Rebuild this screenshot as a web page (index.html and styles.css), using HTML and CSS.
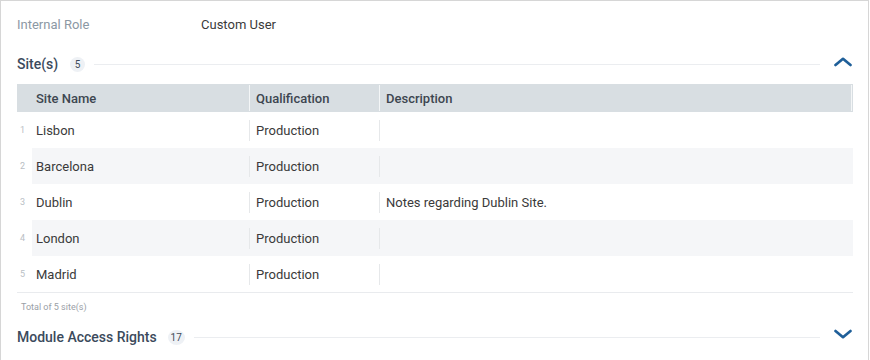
FILE: index.html
```html
<!DOCTYPE html>
<html>
<head>
<meta charset="utf-8">
<link rel="stylesheet" href="styles.css">
</head>
<body>
<div class="card">
  <div class="field">
    <span class="field-label">Internal Role</span>
    <span class="field-value">Custom User</span>
  </div>

  <div class="section-head">
    <span class="section-title">Site(s)</span>
    <span class="badge">5</span>
    <span class="rule"></span>
    <svg class="chev" width="18" height="10" viewBox="0 0 18 10"><path d="M1.5 8 L9 1.8 L16.5 8" fill="none" stroke="#1f5f99" stroke-width="2.7" stroke-linecap="round" stroke-linejoin="round"/></svg>
  </div>

  <div class="grid">
    <div class="head">
      <div class="hnum"></div>
      <div class="hcell first">Site Name</div>
      <div class="hcell">Qualification</div>
      <div class="hcell last">Description</div>
    </div>
    <div class="row">
      <div class="num">1</div>
      <div class="cell first"><span>Lisbon</span></div>
      <div class="cell"><span>Production</span></div>
      <div class="cell"><span></span></div>
    </div>
    <div class="row alt">
      <div class="num">2</div>
      <div class="cell first"><span>Barcelona</span></div>
      <div class="cell"><span>Production</span></div>
      <div class="cell"><span></span></div>
    </div>
    <div class="row">
      <div class="num">3</div>
      <div class="cell first"><span>Dublin</span></div>
      <div class="cell"><span>Production</span></div>
      <div class="cell"><span>Notes regarding Dublin Site.</span></div>
    </div>
    <div class="row alt">
      <div class="num">4</div>
      <div class="cell first"><span>London</span></div>
      <div class="cell"><span>Production</span></div>
      <div class="cell"><span></span></div>
    </div>
    <div class="row">
      <div class="num">5</div>
      <div class="cell first"><span>Madrid</span></div>
      <div class="cell"><span>Production</span></div>
      <div class="cell"><span></span></div>
    </div>
  </div>
  <div class="total">Total of 5 site(s)</div>

  <div class="section-head module">
    <span class="section-title">Module Access Rights</span>
    <span class="badge wide">17</span>
    <span class="rule"></span>
    <svg class="chev down" width="18" height="10" viewBox="0 0 18 10"><path d="M1.5 2 L9 8.2 L16.5 2" fill="none" stroke="#1f5f99" stroke-width="2.7" stroke-linecap="round" stroke-linejoin="round"/></svg>
  </div>
</div>
</body>
</html>
```

FILE: styles.css
```css
html, body {
  margin: 0;
  padding: 0;
  background: #ffffff;
}
body {
  font-family: Roboto, "Liberation Sans", Arial, sans-serif;
  color: #333;
  width: 870px;
  height: 360px;
  overflow: hidden;
}
.card {
  box-sizing: border-box;
  width: 869px;
  height: 372px;
  border: 1px solid #d6d6d6;
  padding: 13px 16px 0 16px;
}
.field {
  display: flex;
  height: 20px;
  align-items: center;
  font-size: 13px;
}
.field-label {
  width: 184px;
  color: #8c98a4;
}
.field-value {
  color: #3a3a3a;
}
.section-head {
  display: flex;
  align-items: center;
  height: 20px;
  margin-top: 20px;
}
.section-title {
  font-size: 14px;
  font-weight: 500;
  color: #3b4a5c;
}
.badge {
  margin-left: 12px;
  width: 15px;
  height: 15px;
  border-radius: 50%;
  background: #eef1f5;
  color: #3e4b5a;
  font-size: 10px;
  display: flex;
  align-items: center;
  justify-content: center;
}
.badge.wide {
  width: 17px;
  margin-left: 11px;
}
.rule {
  flex: 1;
  height: 1px;
  background: #ebedf0;
  margin-left: 9px;
  margin-right: 14px;
}
.chev {
  display: block;
  margin-right: 0;
  margin-bottom: 4px;
}
.chev.down {
  margin-bottom: 6px;
}
.grid {
  margin-top: 10px;
  width: 836px;
  border-bottom: 1px solid #e9ebee;
}
.head, .row {
  display: grid;
  grid-template-columns: 15px 217px 130px 1fr;
}
.head {
  height: 28px;
  background: #d8dee2;
}
.hcell {
  display: flex;
  align-items: center;
  padding-left: 6px;
  font-size: 13px;
  font-weight: 500;
  color: #3d4650;
  border-left: 1px solid #f4f6f7;
  margin: 1px 0;
}
.hcell.first {
  border-left: none;
  padding-left: 4px;
}
.hcell.last {
  border-right: 1px solid #f4f6f7;
  margin-right: 1px;
}
.row {
  height: 36px;
}
.row.alt .cell {
  background: #f5f6f8;
}
.num {
  font-size: 9px;
  color: #b9bec4;
  display: flex;
  align-items: center;
  padding-left: 3px;
}
.cell {
  display: flex;
  align-items: center;
  font-size: 13px;
  color: #3a3a3a;
}
.cell span {
  display: flex;
  align-items: center;
  height: 21px;
  width: 100%;
  padding-left: 6px;
  border-left: 1px solid #e6e8ea;
}
.cell.first span {
  border-left: none;
  padding-left: 4px;
}
.total {
  font-size: 9px;
  color: #9aa0a6;
  padding-left: 4px;
  margin-top: 8px;
  height: 12px;
  line-height: 12px;
}
.section-head.module {
  margin-top: 14px;
}
```
